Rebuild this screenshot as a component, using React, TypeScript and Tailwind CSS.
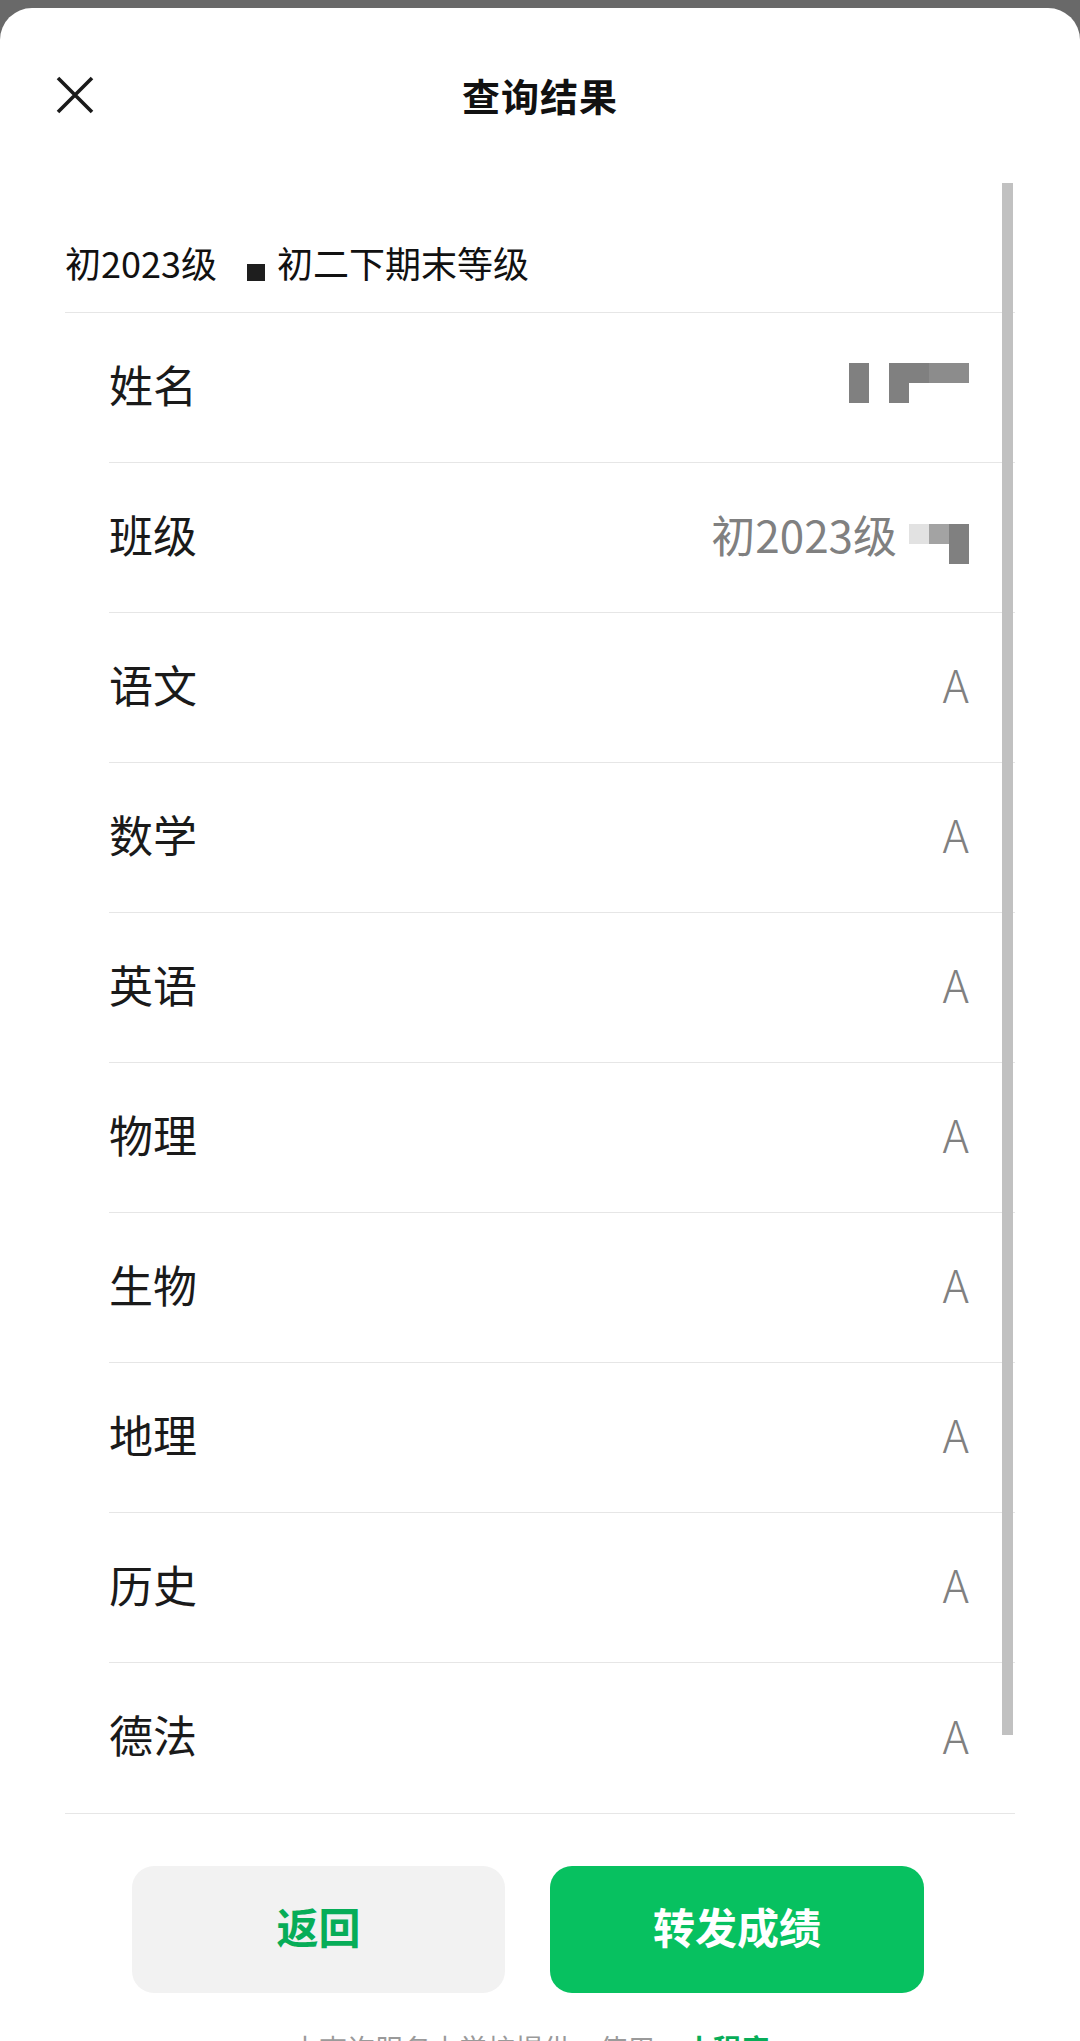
import React from "react";

const rows: { label: string; value?: string; kind?: "name" | "class" }[] = [
  { label: "姓名", kind: "name" },
  { label: "班级", kind: "class" },
  { label: "语文", value: "A" },
  { label: "数学", value: "A" },
  { label: "英语", value: "A" },
  { label: "物理", value: "A" },
  { label: "生物", value: "A" },
  { label: "地理", value: "A" },
  { label: "历史", value: "A" },
  { label: "德法", value: "A" },
];

function NameBlocks() {
  return (
    <div className="grid grid-cols-[20px_20px_20px_20px_20px_20px] grid-rows-[20px_20px] mt-[-2px]">
      <div className="bg-[#808080]" />
      <div />
      <div className="bg-[#808080]" />
      <div className="bg-[#808080]" />
      <div className="bg-[#8c8c8c]" />
      <div className="bg-[#8c8c8c]" />
      <div className="bg-[#808080]" />
      <div />
      <div className="bg-[#808080]" />
      <div />
      <div />
      <div />
    </div>
  );
}

function ClassValue() {
  return (
    <div className="flex items-center gap-[12px]">
      <span className="text-[44px] leading-none text-[#808080]">初2023级</span>
      <div className="grid grid-cols-[20px_20px_20px] grid-rows-[20px_20px] mt-[20px]">
        <div className="bg-[#e2e2e2]" />
        <div className="bg-[#a3a3a3]" />
        <div className="bg-[#808080]" />
        <div />
        <div />
        <div className="bg-[#808080]" />
      </div>
    </div>
  );
}

export default function App() {
  return (
    <div className="w-[1080px] h-[2041px] overflow-hidden bg-[#696969] pt-[8px] font-['Noto_Sans_CJK_SC','Noto_Sans',sans-serif]">
      <div className="h-full bg-white rounded-t-[32px] flex flex-col">
        {/* Title bar */}
        <div className="relative h-[174px] shrink-0 flex items-center justify-center">
          <button className="absolute left-[56px] top-1/2 -translate-y-1/2 w-[38px] h-[38px]">
            <svg viewBox="0 0 38 38" width="38" height="38">
              <path d="M2 2 L36 36 M36 2 L2 36" stroke="#1a1a1a" strokeWidth="3.6" fill="none" />
            </svg>
          </button>
          <h1 className="text-[38px] font-bold text-[#111] leading-none tracking-[1px]">查询结果</h1>
        </div>

        {/* List */}
        <div className="relative ml-[65px] w-[950px] shrink-0 border-b border-[#e6e6e6]">
          <div className="absolute left-[937px] top-[1px] w-[11px] h-[1552px] bg-[#c1c1c1]" />
          <div className="h-[131px] pt-[30px] flex items-center border-b border-[#e6e6e6] text-[36px] text-[#111]">
            <span>初2023级</span>
            <span className="inline-block w-[18px] h-[17px] bg-[#1e1e1e] ml-[30px] mr-[12px] mt-[20px]" />
            <span>初二下期末等级</span>
          </div>
          {rows.map((r, i) => (
            <div key={r.label} className="h-[150px]">
              <div
                className={
                  i === rows.length - 1
                    ? "ml-[44px] h-full pr-[46px] pb-[8px] flex items-center justify-between"
                    : "ml-[44px] h-full pr-[46px] pb-[8px] flex items-center justify-between border-b border-[#e6e6e6]"
                }
              >
                <span className="text-[44px] text-[#1a1a1a] leading-none">{r.label}</span>
                {r.kind === "name" ? (
                  <NameBlocks />
                ) : r.kind === "class" ? (
                  <ClassValue />
                ) : (
                  <span className="text-[45px] text-[#808080] leading-none font-light">{r.value}</span>
                )}
              </div>
            </div>
          ))}
        </div>

        {/* Buttons */}
        <div className="flex gap-[45px] pl-[132px] mt-[52px] shrink-0">
          <button className="w-[373px] h-[127px] pb-[8px] rounded-[22px] bg-[#f2f2f2] text-[#07ad58] text-[42px] font-bold">
            返回
          </button>
          <button className="w-[374px] h-[127px] pb-[8px] rounded-[22px] bg-[#07c160] text-white text-[42px] font-bold">
            转发成绩
          </button>
        </div>

        {/* Footer */}
        <div className="mt-[34px] flex justify-center items-center gap-[30px] text-[28px] leading-[42px] pr-[20px]">
          <span className="text-[#9a9a9a]">本查询服务由学校提供，使用</span>
          <span className="text-[#07ad58] font-bold">小程序</span>
        </div>
      </div>
    </div>
  );
}
